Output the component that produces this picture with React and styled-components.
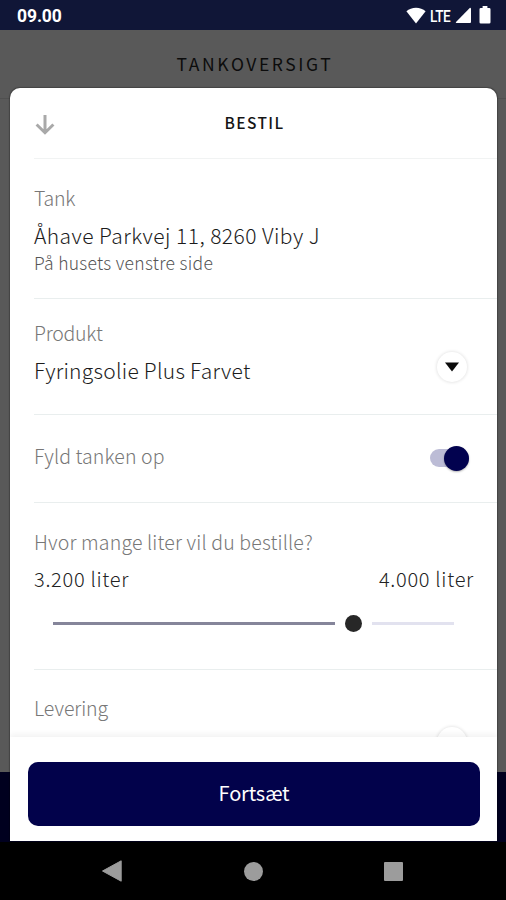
import styled, {createGlobalStyle} from 'styled-components';

const App = () => {
  return (
    <>
      <GlobalStyle/>
      <Screen>
        <StatusBar>
          <Clock>09.00</Clock>
          <StatusIcons>
            <svg width="20" height="17" viewBox="0 0 20 17">
              <path d="M.4 4.3C3 2 6.300 .8 10 .8s7 1.200 9.600 3.500L10 16.400z" fill="#fff"/>
            </svg>
            <Network>LTE</Network>
            <svg width="17" height="17" viewBox="0 0 17 17">
              <path d="M15 .8q1 0 1 1V15q0 1-1 1H1.600q-1.400 0-.6-1z" fill="#fff"/>
            </svg>
            <Battery width="12" height="18" viewBox="0 0 12 18">
              <path d="M3.600 0h4.800v2h1.800q1.300 0 1.300 1.300v12.900q0 1.300-1.300 1.300H1.800Q.5 17.500.5 16.200V3.300Q.5 2 1.800 2h1.800z" fill="#fff"/>
            </Battery>
          </StatusIcons>
        </StatusBar>

        <Stage>
          <Overview>
            <OverviewTitle>TANKOVERSIGT</OverviewTitle>
          </Overview>
          <TabBar/>

          <Sheet>
            <Content>
              <Header>
                <svg width="20" height="21" viewBox="0 0 20 21">
                  <path d="M10 1v17.500M1.600 10.500L10 18.700l8.400-8.200" fill="none" stroke="#a9a9a9" strokeWidth="3"/>
                </svg>
                <Title>BESTIL</Title>
              </Header>

              <Section $height={140} $top={25}>
                <Label $spacing="-0.25px">Tank</Label>
                <Value $spacing="0.45px">Åhave Parkvej 11, 8260 Viby J</Value>
                <Note>På husets venstre side</Note>
              </Section>

              <Section $height={116} $top={20}>
                <Label $spacing="-0.25px">Produkt</Label>
                <Row>
                  <Value $spacing="0.25px">Fyringsolie Plus Farvet</Value>
                  <Dropdown>
                    <svg width="14" height="10" viewBox="0 0 14 10">
                      <path d="M0 .5h14L7 9.500z" fill="#0b0b0b"/>
                    </svg>
                  </Dropdown>
                </Row>
              </Section>

              <Section $height={88} $top={27}>
                <Row>
                  <Label $spacing="0.1px">Fyld tanken op</Label>
                  <Switch><Thumb/></Switch>
                </Row>
              </Section>

              <Section $height={167} $top={25}>
                <Label $spacing="0.16px">Hvor mange liter vil du bestille?</Label>
                <Amounts>
                  <span>3.200 liter</span>
                  <span>4.000 liter</span>
                </Amounts>
                <Slider>
                  <Track $width={282} $color="#85859a"/>
                  <Knob/>
                  <Track $width={82} $color="#e2e2ef"/>
                </Slider>
              </Section>

              <Section $height={120} $top={24}>
                <Label $spacing="-0.1px">Levering</Label>
                <Row>
                  <span/>
                  <Dropdown/>
                </Row>
              </Section>
            </Content>

            <Footer>
              <Button>Fortsæt</Button>
            </Footer>
          </Sheet>
        </Stage>

        <NavBar>
          <svg width="20" height="22" viewBox="0 0 20 22">
            <path d="M.5 11L19.200.8v20.400z" fill="#9c9c9c" stroke="#9c9c9c" strokeLinejoin="round"/>
          </svg>
          <Home/>
          <Recent/>
        </NavBar>
      </Screen>
    </>
  )
}

const GlobalStyle = createGlobalStyle`
  * {
    box-sizing: border-box;
  }

  body {
    margin: 0;
    font-family: 'Noto Sans CJK SC', 'Noto Sans', sans-serif;
  }

  svg {
    display: block;
    flex-shrink: 0;
  }
`;

const Screen = styled.div`
  display: flex;
  flex-direction: column;
  width: 506px;
  height: 900px;
  overflow: hidden;
  background: #000;
`;

const StatusBar = styled.div`
  display: flex;
  justify-content: space-between;
  align-items: center;
  height: 30px;
  padding: 0 15px 0 17px;
  background: #101637;
  color: #fff;
  font-family: Roboto, sans-serif;
`;

const Clock = styled.div`
  padding-top: 2px;
  font-size: 17.5px;
  font-weight: 700;
  letter-spacing: -0.1px;
`;

const StatusIcons = styled.div`
  display: flex;
  align-items: center;
`;

const Network = styled.div`
  width: 22px;
  margin: 2px 3px 0 4px;
  font-size: 17px;
  font-weight: 500;
  letter-spacing: -0.6px;
  transform: scaleX(0.8);
  transform-origin: left;
`;

const Battery = styled.svg`
  margin-left: 7px;
`;

const Stage = styled.div`
  position: relative;
  display: flex;
  flex-direction: column;
  height: 812px;
  background: #595959;
`;

const Overview = styled.div`
  height: 69px;
  border-bottom: 1px solid #505050;
`;

const OverviewTitle = styled.div`
  padding-top: 19px;
  line-height: 30px;
  text-align: center;
  text-indent: 4px;
  font-size: 17.5px;
  font-weight: 400;
  letter-spacing: 2.6px;
  color: #0c0c0c;
`;

const TabBar = styled.div`
  height: 70px;
  margin-top: auto;
  background: #00001f;
`;

const Sheet = styled.div`
  position: absolute;
  top: 58px;
  left: 10px;
  display: flex;
  flex-direction: column;
  width: 487px;
  height: 753px;
  overflow: hidden;
  border-radius: 10px 10px 0 0;
  background: #fff;
  box-shadow: 0 0 1px 1px rgba(0, 0, 0, 0.25);
`;

const Content = styled.div`
  height: 649px;
  padding-left: 24px;
  overflow: hidden;
`;

const Header = styled.div`
  display: flex;
  align-items: center;
  height: 71px;
  padding: 2px 24px 0 1px;
  border-bottom: 1px solid #f1f3f3;
`;

const Title = styled.div`
  flex: 1;
  margin: -4px 20px 0 0;
  line-height: 24px;
  text-align: center;
  font-size: 15.5px;
  font-weight: 500;
  letter-spacing: 1.4px;
  text-indent: 1px;
  color: #151515;
`;

const Section = styled.div`
  display: flex;
  flex-direction: column;
  height: ${({$height}) => $height}px;
  padding-top: ${({$top}) => $top}px;
  border-bottom: 1px solid #e9eeee;
`;

const Label = styled.div`
  line-height: 28px;
  font-size: 19.5px;
  font-weight: 300;
  letter-spacing: ${({$spacing}) => $spacing || '0'};
  color: #777;
`;

const Value = styled.div`
  margin-top: 9px;
  line-height: 28px;
  font-size: 21px;
  font-weight: 300;
  letter-spacing: ${({$spacing}) => $spacing || '0'};
  color: #1c1c1c;
`;

const Note = styled.div`
  margin-top: 2px;
  line-height: 24px;
  font-size: 17.5px;
  font-weight: 300;
  letter-spacing: 0.3px;
  color: #555;
`;

const Row = styled.div`
  display: flex;
  justify-content: space-between;
`;

const Dropdown = styled.div`
  display: flex;
  justify-content: center;
  align-items: center;
  width: 30px;
  height: 30px;
  margin: 5px 30px 0 0;
  border-radius: 50%;
  background: #fff;
  box-shadow: 0 0 3px 1px rgba(0, 0, 0, 0.09);
`;

const Switch = styled.div`
  display: flex;
  align-items: center;
  justify-content: flex-end;
  width: 39px;
  height: 18px;
  margin: 7px 28px 0 0;
  border-radius: 9px;
  background: #bcbcd6;
`;

const Thumb = styled.div`
  width: 25px;
  height: 25px;
  flex-shrink: 0;
  border-radius: 50%;
  background: #02024f;
  box-shadow: 0 1px 2px rgba(0, 0, 0, 0.3);
`;

const Amounts = styled.div`
  display: flex;
  justify-content: space-between;
  margin: 9px 23px 0 0;
  line-height: 28px;
  font-size: 20px;
  font-weight: 300;
  letter-spacing: 0.7px;
  color: #222;
`;

const Slider = styled.div`
  display: flex;
  align-items: center;
  height: 20px;
  margin: 20px 0 0 19px;
`;

const Track = styled.div`
  width: ${({$width}) => $width}px;
  height: 3px;
  background: ${({$color}) => $color};
`;

const Knob = styled.div`
  width: 17px;
  height: 17px;
  margin: 0 10px;
  border-radius: 50%;
  background: #272727;
`;

const Footer = styled.div`
  position: relative;
  height: 104px;
  padding: 25px 17px 15px 18px;
  background: #fff;
  box-shadow: 0 -3px 6px rgba(0, 0, 0, 0.05);
`;

const Button = styled.button`
  display: block;
  width: 100%;
  height: 64px;
  padding: 0 0 3px;
  border: 0;
  border-radius: 10px;
  background: #02024b;
  color: #fff;
  font-family: inherit;
  font-size: 20px;
  font-weight: 400;
  letter-spacing: -0.2px;
`;

const NavBar = styled.div`
  display: flex;
  justify-content: space-between;
  align-items: center;
  height: 58px;
  padding: 0 103px 0 102px;
`;

const Home = styled.div`
  width: 19px;
  height: 19px;
  border-radius: 50%;
  background: #9c9c9c;
`;

const Recent = styled.div`
  width: 19px;
  height: 19px;
  border-radius: 1px;
  background: #9c9c9c;
`;

export default App;
